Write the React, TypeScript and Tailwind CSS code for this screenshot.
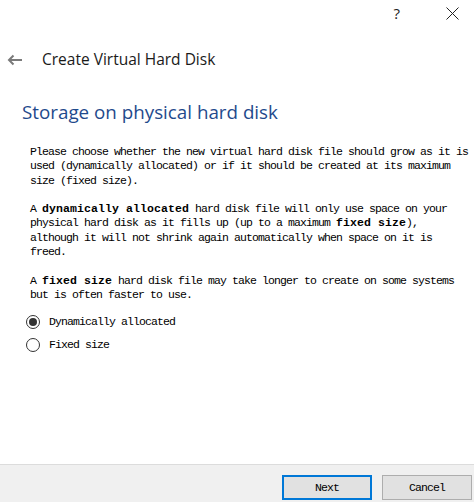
import React from 'react';

const mono = "font-['Liberation_Mono',monospace] text-[11.5px] tracking-[-0.9px] text-black";

const Bold: React.FC<{ children: React.ReactNode }> = ({ children }) => (
  <span className="font-bold tracking-[0.1px]">{children}</span>
);

const Radio: React.FC<{ checked?: boolean; label: string }> = ({ checked, label }) => (
  <div className="flex h-[23px] items-center">
    <span className="flex h-[14px] w-[14px] items-center justify-center rounded-full border border-[#333333] bg-white">
      {checked && <span className="h-[8px] w-[8px] rounded-full bg-[#333333]" />}
    </span>
    <span className={`ml-[9px] ${mono}`}>{label}</span>
  </div>
);

export default function App() {
  return (
    <div className="flex h-[502px] w-[474px] flex-col overflow-hidden bg-white font-['Open_Sans',sans-serif]">
      {/* title bar */}
      <div className="flex h-[26px] items-center justify-end">
        <span className="mr-[46px] text-[15px] leading-none text-[#222]">?</span>
        <svg width="13" height="13" viewBox="0 0 13 13" className="mr-[15px]">
          <path d="M0.5 0.5 L12.5 12.5 M12.5 0.5 L0.5 12.5" stroke="#222" strokeWidth="1" />
        </svg>
      </div>

      {/* wizard header */}
      <div className="mt-[22px] flex h-[24px] items-center">
        <svg width="16" height="12" viewBox="0 0 16 12" className="ml-[7px]">
          <path d="M15 6 H2 M6.5 1.5 L2 6 L6.5 10.5" stroke="#7a7a7a" strokeWidth="2" fill="none" />
        </svg>
        <span className="ml-[19px] text-[15.5px] text-[#1a1a1a]">Create Virtual Hard Disk</span>
      </div>

      <h1 className="ml-[22px] mt-[26px] h-[28px] text-[18.8px] leading-[28px] text-[#1f4a8c]">
        Storage on physical hard disk
      </h1>

      <div className={`ml-[30px] mt-[19px] leading-[14.3px] whitespace-pre ${mono}`}>
        <div>Please choose whether the new virtual hard disk file should grow as it is</div>
        <div>used (dynamically allocated) or if it should be created at its maximum</div>
        <div>size (fixed size).</div>
        <div className="mt-[14.3px]">
          A <Bold>dynamically allocated</Bold> hard disk file will only use space on your
        </div>
        <div>
          physical hard disk as it fills up (up to a maximum <Bold>fixed size</Bold>),
        </div>
        <div>although it will not shrink again automatically when space on it is</div>
        <div>freed.</div>
        <div className="mt-[14.3px]">
          A <Bold>fixed size</Bold> hard disk file may take longer to create on some systems
        </div>
        <div>but is often faster to use.</div>
      </div>

      <div className="ml-[26px] mt-[8px] flex flex-col">
        <Radio checked label="Dynamically allocated" />
        <Radio label="Fixed size" />
      </div>

      <div className="flex-1" />

      {/* footer */}
      <div className="flex h-[38px] items-start justify-end gap-[10px] border-t border-[#dcdcdc] bg-[#f0f0f0] pr-[2px] pt-[10px]">
        <button className={`h-[25px] w-[90px] border-2 border-[#0078d7] bg-[#e1e1e1] ${mono}`}>Next</button>
        <button className={`h-[25px] w-[90px] border border-[#adadad] bg-[#e1e1e1] ${mono}`}>Cancel</button>
      </div>
    </div>
  );
}
